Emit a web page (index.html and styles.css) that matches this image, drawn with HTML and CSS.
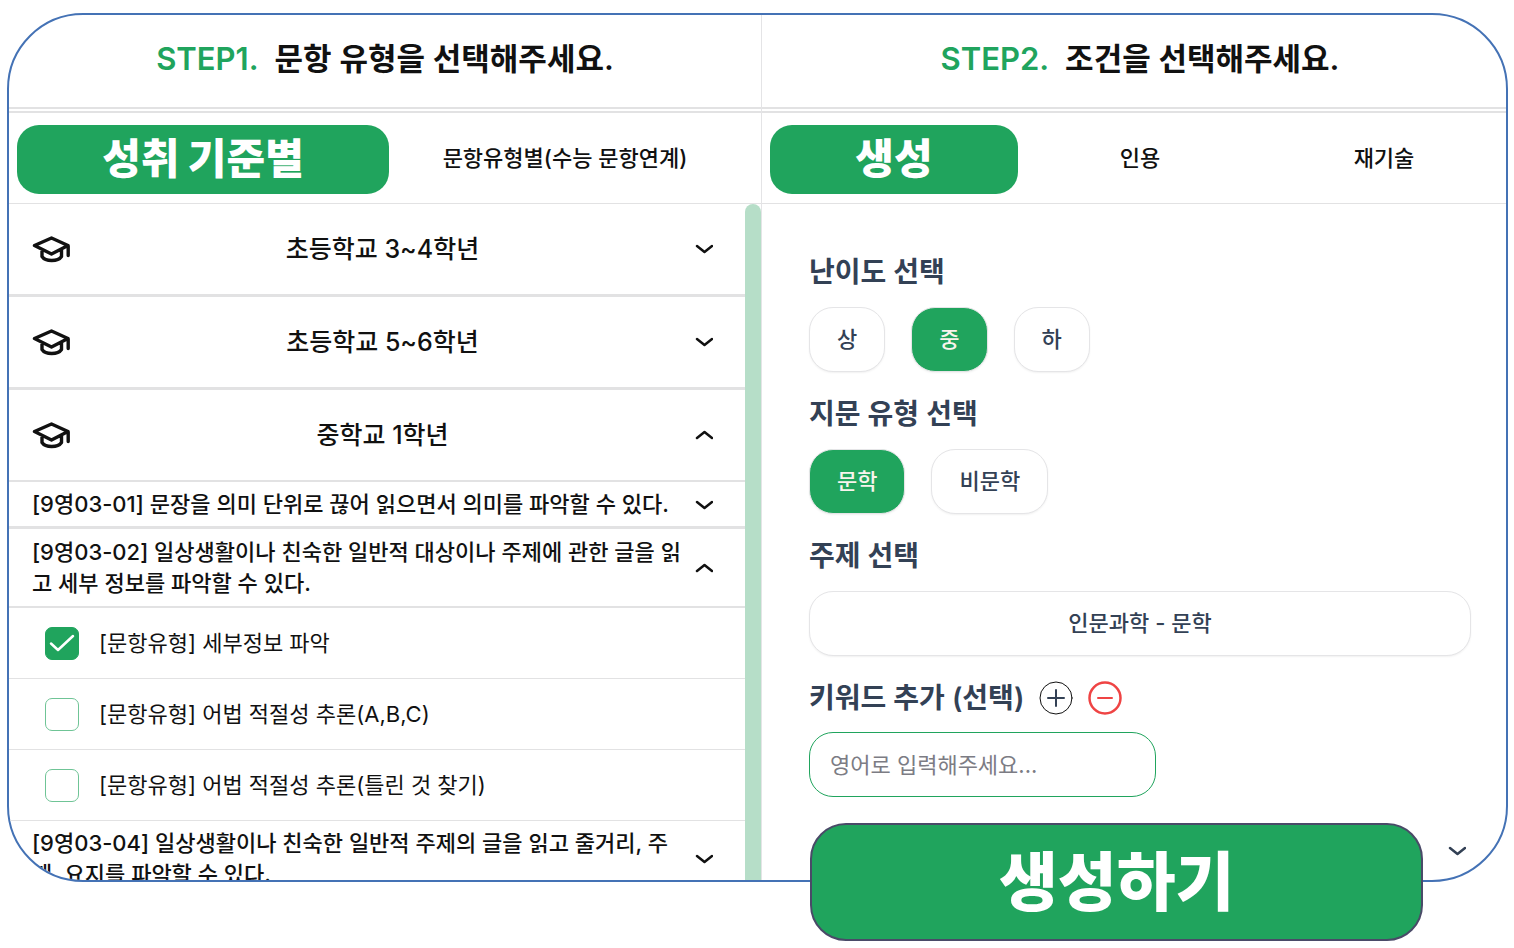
FILE: index.html
```
<!DOCTYPE html>
<html lang="ko">
<head>
    <meta charset="UTF-8">
    <meta name="viewport" content="width=device-width, initial-scale=1">
    <title>문항 생성</title>
    <link rel="stylesheet" href="styles.css">
</head>
<body>
<!-- 공용 아이콘 -->
<svg class="sprite" aria-hidden="true">
    <symbol id="icon-cap" viewBox="0 0 38 28">
        <path d="M2.5 10.5 19.5 3 36 10.5 19.5 19Z M36.2 11V20.5 M10 14.5V21.5C13.5 26.8 26 26.8 29.5 21.5V14.5"/>
    </symbol>
    <symbol id="icon-down" viewBox="0 0 18 18">
        <path d="M2 6 9.5 12 17 6"/>
    </symbol>
    <symbol id="icon-up" viewBox="0 0 18 18">
        <path d="M2 12 9.5 6 17 12"/>
    </symbol>
</svg>

<main class="page">
    <div class="card">
        <!-- STEP1 -->
        <section class="panel panel-left">
            <h1 class="step"><span class="step-no">STEP1.</span>문항 유형을 선택해주세요.</h1>
            <div class="tabs tabs-type">
                <button class="tab active" type="button">성취 기준별</button>
                <button class="tab" type="button">문항유형별(수능 문항연계)</button>
            </div>
            <div class="scroll">
                <div class="list">
                    <button class="row grade" type="button">
                        <svg class="cap"><use href="#icon-cap"/></svg>
                        <span class="row-text">초등학교 3~4학년</span>
                        <svg class="chevron"><use href="#icon-down"/></svg>
                    </button>
                    <button class="row grade" type="button">
                        <svg class="cap"><use href="#icon-cap"/></svg>
                        <span class="row-text">초등학교 5~6학년</span>
                        <svg class="chevron"><use href="#icon-down"/></svg>
                    </button>
                    <button class="row grade open" type="button">
                        <svg class="cap"><use href="#icon-cap"/></svg>
                        <span class="row-text">중학교 1학년</span>
                        <svg class="chevron"><use href="#icon-up"/></svg>
                    </button>

                    <button class="row standard" type="button">
                        <span class="row-text">[9영03-01] 문장을 의미 단위로 끊어 읽으면서 의미를 파악할 수 있다.</span>
                        <svg class="chevron"><use href="#icon-down"/></svg>
                    </button>
                    <button class="row standard open" type="button">
                        <span class="row-text">[9영03-02] 일상생활이나 친숙한 일반적 대상이나 주제에 관한 글을 읽고 세부 정보를 파악할 수 있다.</span>
                        <svg class="chevron"><use href="#icon-up"/></svg>
                    </button>

                    <label class="row option">
                        <input class="check" type="checkbox" checked>
                        <span>[문항유형] 세부정보 파악</span>
                    </label>
                    <label class="row option">
                        <input class="check" type="checkbox">
                        <span>[문항유형] 어법 적절성 추론(A,B,C)</span>
                    </label>
                    <label class="row option">
                        <input class="check" type="checkbox">
                        <span>[문항유형] 어법 적절성 추론(틀린 것 찾기)</span>
                    </label>

                    <button class="row standard" type="button">
                        <span class="row-text">[9영03-04] 일상생활이나 친숙한 일반적 주제의 글을 읽고 줄거리, 주제, 요지를 파악할 수 있다.</span>
                        <svg class="chevron"><use href="#icon-down"/></svg>
                    </button>
                </div>
                <div class="scrollbar"></div>
            </div>
        </section>

        <!-- STEP2 -->
        <section class="panel panel-right">
            <h1 class="step"><span class="step-no">STEP2.</span>조건을 선택해주세요.</h1>
            <div class="tabs tabs-mode">
                <button class="tab active" type="button">생성</button>
                <button class="tab" type="button">인용</button>
                <button class="tab" type="button">재기술</button>
            </div>
            <div class="form">
                <div class="field">
                    <h2 class="field-title">난이도 선택</h2>
                    <div class="chips">
                        <button class="chip" type="button">상</button>
                        <button class="chip selected" type="button">중</button>
                        <button class="chip" type="button">하</button>
                    </div>
                </div>
                <div class="field">
                    <h2 class="field-title">지문 유형 선택</h2>
                    <div class="chips">
                        <button class="chip selected" type="button">문학</button>
                        <button class="chip" type="button">비문학</button>
                    </div>
                </div>
                <div class="field">
                    <h2 class="field-title">주제 선택</h2>
                    <button class="chip wide" type="button">인문과학 - 문학</button>
                </div>
                <div class="field">
                    <div class="field-head">
                        <label class="field-title" for="keyword">키워드 추가 (선택)</label>
                        <button class="round" type="button" aria-label="추가">
                            <svg viewBox="0 0 34 34">
                                <circle class="ring" cx="17" cy="17" r="16"/>
                                <path d="M9 17H25M17 9V25"/>
                            </svg>
                        </button>
                        <button class="round remove" type="button" aria-label="삭제">
                            <svg viewBox="0 0 34 34">
                                <circle class="ring" cx="17" cy="17" r="15.5"/>
                                <path d="M10 17H24"/>
                            </svg>
                        </button>
                    </div>
                    <input class="keyword" id="keyword" type="text" placeholder="영어로 입력해주세요...">
                </div>
                <button class="more" type="button" aria-label="더 보기">
                    <svg class="chevron"><use href="#icon-down"/></svg>
                </button>
            </div>
        </section>
    </div>
    <button class="submit" type="button">생성하기</button>
</main>
</body>
</html>
```
FILE: styles.css
```
* {
    box-sizing: border-box;
}

body {
    margin: 0;
    background: #fff;
    color: #111;
    font-family: Inter, "Noto Sans CJK KR", sans-serif;
    font-size: 22px;
    font-weight: 500;
    line-height: 31px;
}

button,
input {
    font: inherit;
    color: inherit;
}

button {
    padding: 0;
    border: none;
    background: none;
    cursor: pointer;
}

svg {
    flex: none;
    fill: none;
    stroke: currentColor;
    stroke-linecap: round;
    stroke-linejoin: round;
}

.sprite {
    position: absolute;
    width: 0;
    height: 0;
}

/* 전체 틀 */
.page {
    position: relative;
    height: 100vh;
    padding: 13px 6px 66px 7px;
}

.card {
    display: grid;
    grid-template-columns: 753fr 744fr;
    height: 100%;
    border: 2px solid #4472b5;
    border-radius: 76px;
    overflow: hidden;
}

.panel {
    display: flex;
    flex-direction: column;
    min-width: 0;
    min-height: 0;
}

.panel-left {
    border-right: 1px solid #e4e4e6;
}

.step {
    flex: none;
    height: 98px;
    margin: 0;
    border-bottom: 6px double #e2e2e3;
    font-size: 31px;
    font-weight: 600;
    line-height: 88px;
    text-align: center;
}

.panel-right .step {
    padding-left: 12px;
}

.step-no {
    margin-right: 16px;
    color: #20a45d;
}

/* 탭 */
.tabs {
    display: grid;
    flex: none;
    height: 91px;
    padding: 12px 0 9px 8px;
    border-bottom: 1px solid #e2e2e3;
}

.tabs-type {
    grid-template-columns: 372fr 352fr;
    padding-right: 20px;
}

.tabs-mode {
    grid-template-columns: 248fr 244fr 244fr;
}

.tab {
    padding-bottom: 2px;
}

.tab.active {
    border-radius: 22px;
    background: #20a45d;
    color: #fff;
    font-size: 42px;
    font-weight: 900;
}

/* 성취기준 목록 */
.scroll {
    display: flex;
    flex: 1;
    min-height: 0;
    overflow: hidden;
}

.list {
    flex: 1;
    min-width: 0;
}

.scrollbar {
    width: 16px;
    border-radius: 8px 8px 0 0;
    background: #b6dec8;
}

.row {
    display: flex;
    align-items: center;
    width: 100%;
    padding: 0 32px 0 23px;
    border-bottom: 3px solid #e2e2e3;
}

.row-text {
    flex: 1;
}

.row.open {
    border-bottom-width: 2px;
}

.grade {
    height: 93px;
    font-size: 25px;
}

.grade.open {
    height: 92px;
}

.standard {
    gap: 12px;
    padding-top: 7px;
    padding-bottom: 6px;
    text-align: left;
}

.standard.open {
    padding-top: 8px;
    padding-bottom: 7px;
}

.option {
    gap: 20px;
    height: 71px;
    padding-left: 36px;
    border-bottom-width: 1px;
    font-weight: 400;
    cursor: pointer;
}

.cap {
    width: 38px;
    height: 28px;
    stroke-width: 3.4;
}

.chevron {
    width: 18px;
    height: 18px;
    stroke-width: 2.5;
}

.check {
    width: 34px;
    height: 33px;
    margin: 0;
    border: 1px solid #6fc496;
    border-radius: 7px;
    appearance: none;
}

.check:checked {
    border-color: #20a45d;
    background: #20a45d url("data:image/svg+xml,%3Csvg xmlns='http://www.w3.org/2000/svg' viewBox='0 0 32 31' fill='none' stroke='white' stroke-width='2.5' stroke-linecap='round' stroke-linejoin='round'%3E%3Cpath d='M5 15.5 12 22 27 8'/%3E%3C/svg%3E") center no-repeat;
}

/* 조건 선택 */
.form {
    display: flex;
    flex-direction: column;
    gap: 24px;
    padding: 50px 35px 0 47px;
    color: #334155;
}

.field-title {
    margin: 0;
    font-size: 28px;
    font-weight: 600;
    line-height: 36px;
}

.field-head {
    display: flex;
    align-items: center;
    gap: 15px;
}

.chips {
    display: flex;
    gap: 26px;
    margin-top: 17px;
}

.chip {
    height: 65px;
    padding: 0 27px;
    border: 1px solid #e5e5e7;
    border-radius: 24px;
    background: #fff;
    box-shadow: 0 1px 2px rgba(0, 0, 0, 0.06);
}

.chip.selected {
    background: #20a45d;
    color: #f8f4ec;
}

.chip.wide {
    width: 100%;
    margin-top: 17px;
}

.round {
    width: 34px;
    height: 34px;
}

.round svg {
    display: block;
    stroke-width: 2;
}

.round .ring {
    stroke: #111;
    stroke-width: 1;
}

.remove {
    color: #ef4444;
}

.remove .ring {
    stroke: #ef4444;
    stroke-width: 2.5;
}

.keyword {
    display: block;
    width: 347px;
    max-width: 100%;
    height: 65px;
    margin-top: 16px;
    padding: 0 20px;
    border: 1px solid #20a45d;
    border-radius: 24px;
    outline: none;
    font-weight: 400;
}

.keyword::placeholder {
    color: #7c7c84;
}

.more {
    display: flex;
    align-items: center;
    justify-content: flex-end;
    height: 60px;
    padding-right: 5px;
}

/* 카드 아래쪽에 걸치는 생성 버튼 */
.submit {
    position: absolute;
    right: 6%;
    bottom: 7px;
    width: 613px;
    height: 118px;
    padding-bottom: 2px;
    border: 2px solid #4a4a68;
    border-radius: 36px;
    background: #20a45d;
    color: #fff;
    font-size: 64px;
    font-weight: 900;
}
```
